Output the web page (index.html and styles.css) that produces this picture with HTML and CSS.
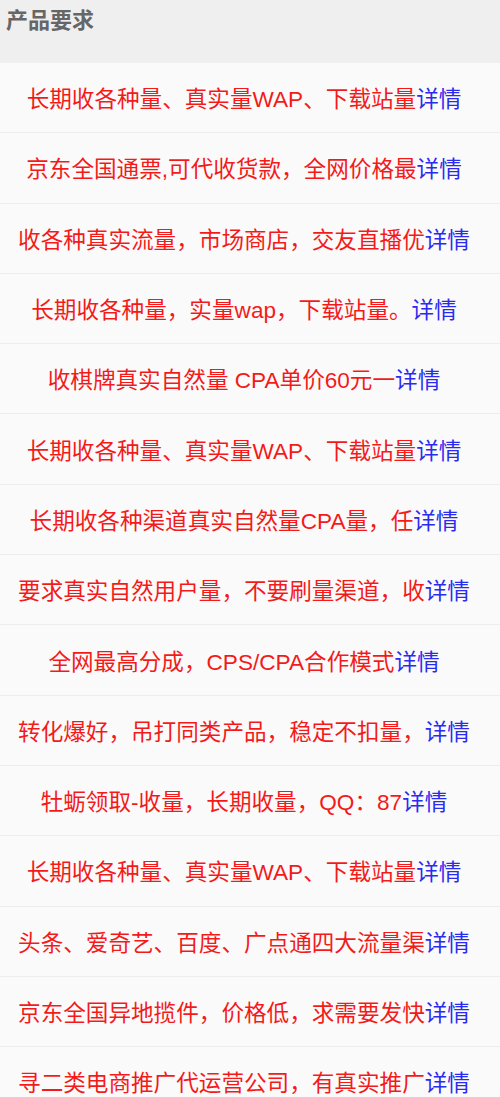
FILE: index.html
```html
<!DOCTYPE html>
<html lang="zh-CN">
<head>
<meta charset="utf-8">
<title>产品要求</title>
<link rel="stylesheet" href="styles.css">
</head>
<body>
<div class="page">
  <div class="section-title">产品要求</div>
  <ul class="req-list">
    <li class="req-item"><span class="req-text">长期收各种量、真实量WAP、下载站量</span><a class="req-more">详情</a></li>
    <li class="req-item"><span class="req-text">京东全国通票,可代收货款，全网价格最</span><a class="req-more">详情</a></li>
    <li class="req-item"><span class="req-text">收各种真实流量，市场商店，交友直播优</span><a class="req-more">详情</a></li>
    <li class="req-item"><span class="req-text">长期收各种量，实量wap，下载站量。</span><a class="req-more">详情</a></li>
    <li class="req-item"><span class="req-text">收棋牌真实自然量 CPA单价60元一</span><a class="req-more">详情</a></li>
    <li class="req-item"><span class="req-text">长期收各种量、真实量WAP、下载站量</span><a class="req-more">详情</a></li>
    <li class="req-item"><span class="req-text">长期收各种渠道真实自然量CPA量，任</span><a class="req-more">详情</a></li>
    <li class="req-item"><span class="req-text">要求真实自然用户量，不要刷量渠道，收</span><a class="req-more">详情</a></li>
    <li class="req-item"><span class="req-text">全网最高分成，CPS/CPA合作模式</span><a class="req-more">详情</a></li>
    <li class="req-item"><span class="req-text">转化爆好，吊打同类产品，稳定不扣量，</span><a class="req-more">详情</a></li>
    <li class="req-item"><span class="req-text">牡蛎领取-收量，长期收量，QQ：87</span><a class="req-more">详情</a></li>
    <li class="req-item"><span class="req-text">长期收各种量、真实量WAP、下载站量</span><a class="req-more">详情</a></li>
    <li class="req-item"><span class="req-text">头条、爱奇艺、百度、广点通四大流量渠</span><a class="req-more">详情</a></li>
    <li class="req-item"><span class="req-text">京东全国异地揽件，价格低，求需要发快</span><a class="req-more">详情</a></li>
    <li class="req-item"><span class="req-text">寻二类电商推广代运营公司，有真实推广</span><a class="req-more">详情</a></li>
  </ul>
</div>
</body>
</html>
```

FILE: styles.css
```css
html, body {
  margin: 0;
  padding: 0;
  background: #fafafa;
}

.page {
  width: 500px;
  height: 1097px;
  overflow: hidden;
  font-family: "Liberation Sans", "Noto Sans CJK SC", sans-serif;
}

.section-title {
  height: 63px;
  box-sizing: border-box;
  padding: 7px 0 0 6px;
  background: #efefef;
  color: #666;
  font-size: 22px;
  font-weight: bold;
  line-height: 27px;
}

.req-list {
  list-style: none;
  margin: 0;
  padding: 0;
}

.req-item {
  height: 70.3px;
  box-sizing: border-box;
  padding-right: 12px;
  border-bottom: 1px solid #ededed;
  background: #fafafa;
  display: flex;
  align-items: center;
  justify-content: center;
  font-size: 22.6px;
  white-space: nowrap;
}

.req-text {
  color: #f41a1a;
}

.req-more {
  color: #2b2bf0;
  text-decoration: none;
}
```
